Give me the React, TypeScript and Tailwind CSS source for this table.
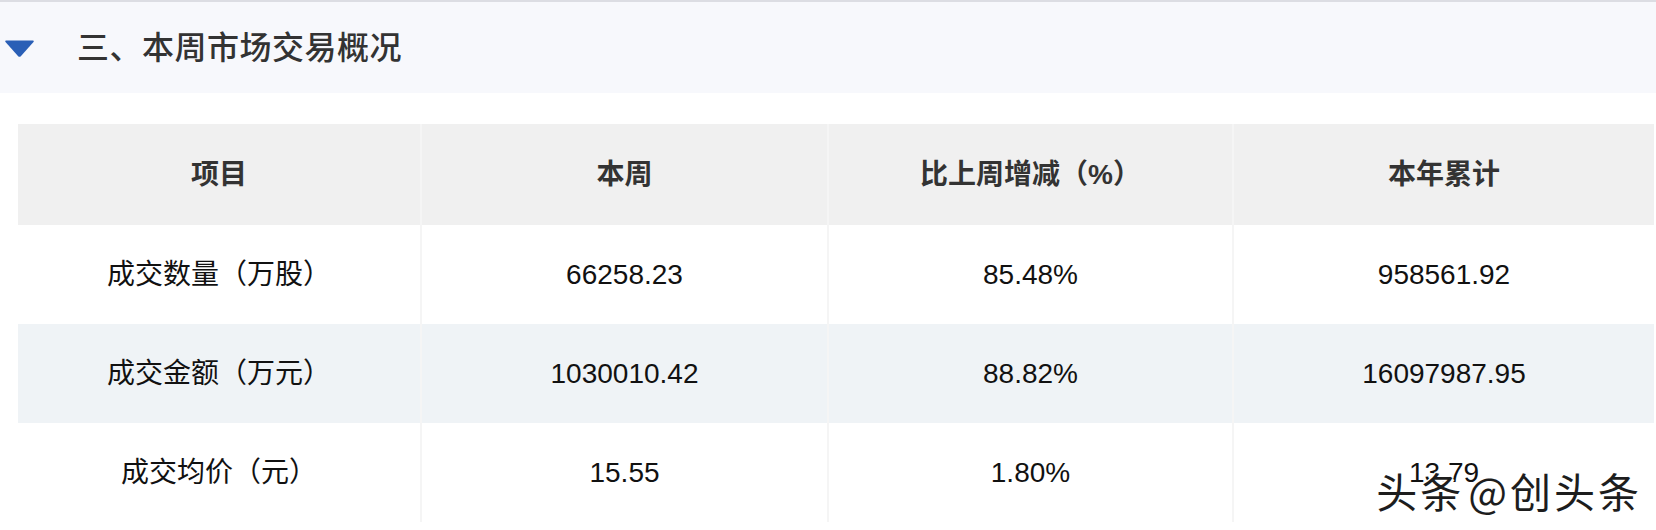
import React from 'react';

const rows = [
  { name: '成交数量（万股）', week: '66258.23', change: '85.48%', year: '958561.92' },
  { name: '成交金额（万元）', week: '1030010.42', change: '88.82%', year: '16097987.95' },
  { name: '成交均价（元）', week: '15.55', change: '1.80%', year: '13.79' },
];

const headers = ['项目', '本周', '比上周增减（%）', '本年累计'];

const font = "font-['Liberation_Sans','Noto_Sans_CJK_SC',sans-serif]";

export default function App() {
  return (
    <div className={`relative w-[1656px] h-[530px] bg-white overflow-hidden ${font}`}>
      {/* Section title */}
      <div className="border-t-2 border-[#dcdde3] bg-[#f7f8fc] h-[93px] flex items-center">
        <svg width="31" height="19" viewBox="0 0 31 19" className="ml-[4px] mt-[2px]">
          <path d="M2 1.5 H29 Q30.5 1.5 29.5 3 L16.8 17.2 Q15.5 18.5 14.2 17.2 L1.5 3 Q0.5 1.5 2 1.5 Z" fill="#2a5fb6" />
        </svg>
        <h2 className="ml-[42px] text-[32px] font-medium text-[#333] tracking-[0.5px]">三、本周市场交易概况</h2>
      </div>

      {/* Table */}
      <div className="mt-[31px] ml-[18px] grid grid-cols-[402px_405px_403px_420px] gap-x-[2px] bg-[#f5f5f5] w-[1636px]">
        {headers.map((h) => (
          <div key={h} className="h-[101px] bg-[#f0f0f0] flex items-center justify-center text-[28px] font-bold text-[#333]">
            {h}
          </div>
        ))}
        {rows.map((r, i) => {
          const bg = i === 1 ? 'bg-[#eff3f6]' : 'bg-white';
          return (
            <React.Fragment key={r.name}>
              <div className={`h-[99px] ${bg} flex items-center justify-center text-[28px] text-[#111]`}>{r.name}</div>
              <div className={`h-[99px] ${bg} flex items-center justify-center text-[28px] text-[#111]`}>{r.week}</div>
              <div className={`h-[99px] ${bg} flex items-center justify-center text-[28px] text-[#111]`}>{r.change}</div>
              <div className={`h-[99px] ${bg} flex items-center justify-center text-[28px] text-[#111]`}>{r.year}</div>
            </React.Fragment>
          );
        })}
      </div>

      {/* Watermark */}
      <div className="absolute right-[14px] bottom-[19px] text-[41px] leading-none tracking-[3px] text-[#1d1d1d] font-['Noto_Sans_CJK_SC',sans-serif] [text-shadow:2px_2px_0_#fff,-1px_-1px_0_#fff,1px_-1px_0_#fff,-1px_1px_0_#fff]">
        头条<span className="ml-[4px]">@</span>创头条
      </div>
    </div>
  );
}
